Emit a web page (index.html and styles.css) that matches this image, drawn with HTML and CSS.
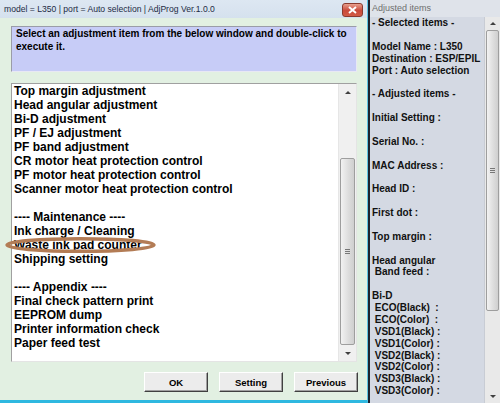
FILE: index.html
```html
<!DOCTYPE html>
<html lang="en">
<head>
    <meta charset="UTF-8">
    <meta name="viewport" content="width=device-width, initial-scale=1.0">
    <title>AdjProg</title>
    <link rel="stylesheet" href="styles.css">
</head>
<body>
    <div class="screen">
        <div class="prog">
            <div class="titlebar">
                <span class="title">model = L350 | port = Auto selection | AdjProg Ver.1.0.0</span>
                <span class="close">
                    <svg width="9" height="8" viewBox="0 0 9 8"><path d="M1 1 L8 7 M8 1 L1 7" stroke="#fff" stroke-width="2"/></svg>
                </span>
            </div>
            <div class="prog-body">
                <div class="hint">Select an adjustment item from the below window and double-click to<br>execute it.</div>

                <div class="listbox">
                    <ul class="items">
                        <li>Top margin adjustment</li>
                        <li>Head angular adjustment</li>
                        <li>Bi-D adjustment</li>
                        <li>PF / EJ adjustment</li>
                        <li>PF band adjustment</li>
                        <li>CR motor heat protection control</li>
                        <li>PF motor heat protection control</li>
                        <li>Scanner motor heat protection control</li>
                        <li>&nbsp;</li>
                        <li>---- Maintenance ----</li>
                        <li>Ink charge / Cleaning</li>
                        <li>Waste ink pad counter</li>
                        <li>Shipping setting</li>
                        <li>&nbsp;</li>
                        <li>---- Appendix ----</li>
                        <li>Final check pattern print</li>
                        <li>EEPROM dump</li>
                        <li>Printer information check</li>
                        <li>Paper feed test</li>
                    </ul>
                    <div class="vscroll">
                        <div class="arrow up"></div>
                        <div class="track"><div class="thumb list-thumb"><span class="grip"></span></div></div>
                        <div class="arrow down"></div>
                    </div>
                    <!-- hand drawn mark round the waste ink item -->
                    <svg class="mark" width="160" height="20" viewBox="0 0 160 20">
                        <ellipse cx="78.5" cy="10" rx="73.5" ry="6.3" fill="none" stroke="#b37c55" stroke-width="3.4"/>
                    </svg>
                </div>

                <div class="buttons">
                    <button type="button">OK</button>
                    <button type="button">Setting</button>
                    <button type="button">Previous</button>
                </div>
            </div>
        </div>

        <div class="side">
            <div class="side-title">Adjusted items</div>
            <div class="side-body">
                <div class="side-text">- Selected items -

Model Name : L350
Destination : ESP/EPIL
Port : Auto selection

- Adjusted items -

Initial Setting :

Serial No. :

MAC Address :

Head ID :

First dot :

Top margin :

Head angular
 Band feed :

Bi-D
 ECO(Black)  :
 ECO(Color)  :
 VSD1(Black) :
 VSD1(Color) :
 VSD2(Black) :
 VSD2(Color) :
 VSD3(Black) :
 VSD3(Color) :</div>
                <div class="vscroll side-scroll">
                    <div class="arrow up"></div>
                    <div class="track"><div class="thumb side-thumb"><span class="grip"></span></div></div>
                    <div class="arrow down"></div>
                </div>
            </div>
        </div>
    </div>
</body>
</html>
```

FILE: styles.css
```css
body {
    margin: 0;
    padding: 0;
    font-family: "Liberation Sans", Arial, sans-serif;
    background: #d4d9e3;
}

.screen {
    display: flex;
    width: 500px;
    height: 403px;
    overflow: hidden;
}

/* left program window */
.prog {
    width: 368px;
    display: flex;
    flex-direction: column;
    border-right: 1px solid #5fc4e4;
    border-bottom: 3px solid #2fb8e0;
    box-sizing: border-box;
    background: #e2f0e2;
}

.titlebar {
    height: 18px;
    display: flex;
    align-items: center;
    justify-content: space-between;
    padding: 0 4px 0 4px;
    background: linear-gradient(#dde7f2, #d5e1ee);
}

.title {
    font-size: 8.6px;
    color: #1d2c44;
    white-space: nowrap;
}

.close {
    width: 19px;
    height: 12px;
    margin-top: 1px;
    display: flex;
    align-items: center;
    justify-content: center;
    border: 1px solid #8a3a2e;
    border-radius: 3px;
    background: linear-gradient(#e8a08e, #c9493a 55%, #d25a45);
}

.prog-body {
    flex: 1;
    padding: 8px 10px 0 11px;
    display: flex;
    flex-direction: column;
}

.hint {
    height: 46px;
    box-sizing: border-box;
    border: 1px solid #9a9ca8;
    border-right-color: #e8e8f4;
    border-bottom-color: #e8e8f4;
    background: #c7ccf7;
    padding: 0 4px;
    font-size: 10px;
    font-weight: bold;
    line-height: 13px;
    color: #000;
}

.listbox {
    position: relative;
    margin-top: 11px;
    height: 279px;
    box-sizing: border-box;
    display: flex;
    background: #fff;
    border: 1px solid #a0a0a0;
    border-right-color: #e4e4e4;
    border-bottom-color: #e4e4e4;
}

.items {
    flex: 1;
    list-style: none;
    margin: 0;
    padding: 0 0 0 2px;
    font-size: 12px;
    font-weight: bold;
    line-height: 14px;
    color: #000;
    white-space: nowrap;
}

.mark {
    position: absolute;
    left: -10px;
    top: 151px;
}

/* scroll bars */
.vscroll {
    width: 17px;
    display: flex;
    flex-direction: column;
    background: #f0f0f0;
    border-left: 1px solid #e6e6e6;
}

.arrow {
    height: 16px;
    position: relative;
}

.arrow::after {
    content: "";
    position: absolute;
    left: 6px;
    top: 7px;
    border-left: 3px solid transparent;
    border-right: 3px solid transparent;
}

.arrow.up::after {
    border-bottom: 3px solid #404040;
}

.arrow.down::after {
    border-top: 3px solid #404040;
}

.track {
    flex: 1;
    position: relative;
}

.thumb {
    position: absolute;
    left: 1px;
    right: 1px;
    display: flex;
    align-items: center;
    justify-content: center;
    border: 1px solid #9e9e9e;
    border-radius: 2px;
    background: linear-gradient(90deg, #f2f2f2, #dcdcdc 60%, #cfcfcf);
}

.list-thumb {
    top: 58px;
    bottom: 0;
}

.grip {
    width: 5px;
    height: 5px;
    background: repeating-linear-gradient(#777 0 1px, transparent 1px 2px);
}

.buttons {
    margin-top: 10px;
    margin-right: -1px;
    display: flex;
    justify-content: flex-end;
    gap: 11px;
}

.buttons button {
    width: 64px;
    height: 20px;
    padding: 0;
    font-family: "Liberation Sans", Arial, sans-serif;
    font-size: 9.5px;
    font-weight: bold;
    color: #000;
    background: #ececec;
    border: 1px solid;
    border-color: #fff #404040 #404040 #fff;
    box-shadow: inset -1px -1px #a0a0a0;
}

/* right adjusted items window */
.side {
    flex: 1;
    display: flex;
    flex-direction: column;
    border-left: 2px solid #1c2330;
}

.side-title {
    height: 17px;
    line-height: 17px;
    padding-left: 2px;
    font-size: 9px;
    color: #6e6e6e;
    background: #dfe3ea;
}

.side-body {
    flex: 1;
    display: flex;
    background: #d4d9e3;
}

.side-text {
    flex: 1;
    padding-left: 2px;
    white-space: pre;
    font-size: 10px;
    font-weight: bold;
    line-height: 11.87px;
    color: #111;
    overflow: hidden;
}

.side-scroll {
    width: 15px;
    background: #e9e9e9;
    border-left: 1px solid #c8ccd4;
}

.side-scroll .arrow {
    height: 13px;
}

.side-scroll .arrow::after {
    left: 5px;
    top: 5px;
}

.side-thumb {
    top: 0;
    height: 279px;
}
```
